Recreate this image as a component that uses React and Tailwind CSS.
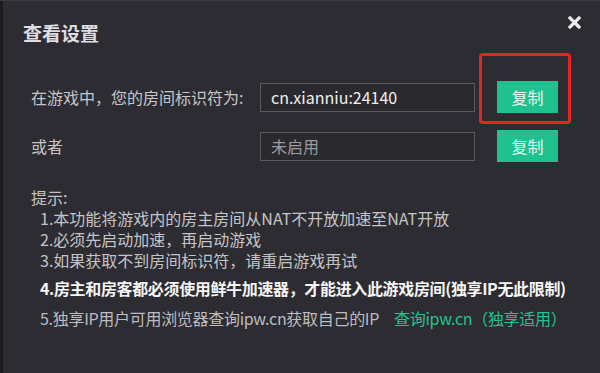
import React from "react";

const font = { fontFamily: '"Noto Sans CJK SC", "Noto Sans", sans-serif' };

function CopyBtn() {
  return (
    <button className="w-[61px] h-[32px] bg-[#1fc18e] text-[#eaf8f2] text-[16px] leading-none flex items-center justify-center">
      复制
    </button>
  );
}

export default function App() {
  return (
    <div
      className="w-[600px] h-[373px] bg-[#2d2c32] relative flex overflow-hidden border-t border-[#3b3a41]"
      style={font}
    >
      <div className="w-[3px] bg-[#1c1c20] shrink-0" />
      <div className="flex-1 flex flex-col">
        <div className="flex justify-between pl-[20px] pr-[19px]">
          <div className="mt-[18px] leading-[28px] text-[19px] font-bold text-[#dedde2]">
            查看设置
          </div>
          <svg width="13" height="13" viewBox="0 0 13 13" className="mt-[15px]">
            <path d="M2 2 L11 11 M11 2 L2 11" stroke="#ececec" strokeWidth="3.2" strokeLinecap="square" />
          </svg>
        </div>

        <div className="flex items-center mt-[34px] pl-[28px]">
          <div className="w-[229px] text-[16px] text-[#c6c6c8]">在游戏中，您的房间标识符为:</div>
          <div className="w-[215px] h-[29px] border border-[#5b5a60] bg-[#2a292e] flex items-center pl-[10px] text-[16px] text-[#f0f0f0]">
            cn.xianniu:24140
          </div>
          <div className="ml-[22px]">
            <CopyBtn />
          </div>
        </div>

        <div className="flex items-center mt-[17px] pl-[28px]">
          <div className="w-[229px] text-[16px] text-[#c6c6c8]">或者</div>
          <div className="w-[215px] h-[29px] border border-[#5b5a60] bg-[#2a292e] flex items-center pl-[10px] text-[16px] text-[#9c9ba0]">
            未启用
          </div>
          <div className="ml-[22px]">
            <CopyBtn />
          </div>
        </div>

        <div className="mt-[25px] pl-[28px] text-[16px] leading-[21px] text-[#c4c4c6]">
          <div>提示:</div>
          <div className="pl-[9px]">
            <div>1.本功能将游戏内的房主房间从NAT不开放加速至NAT开放</div>
            <div>2.必须先启动加速，再启动游戏</div>
            <div>3.如果获取不到房间标识符，请重启游戏再试</div>
            <div className="mt-[7px] font-bold text-[#f6f6f6] tracking-[-0.35px]">
              4.房主和房客都必须使用鲜牛加速器，才能进入此游戏房间(独享IP无此限制)
            </div>
            <div className="mt-[9px] flex">
              <span className="text-[#bdbcc0] tracking-[-0.3px]">5.独享IP用户可用浏览器查询ipw.cn获取自己的IP</span>
              <span className="ml-[15px] text-[#22c28f] tracking-[-0.3px]">查询ipw.cn（独享适用）</span>
            </div>
          </div>
        </div>
      </div>

      <div className="absolute left-[479px] top-[52px] w-[92px] h-[71px] border-[3px] border-[#e3261e] rounded-[4px]" />
    </div>
  );
}
